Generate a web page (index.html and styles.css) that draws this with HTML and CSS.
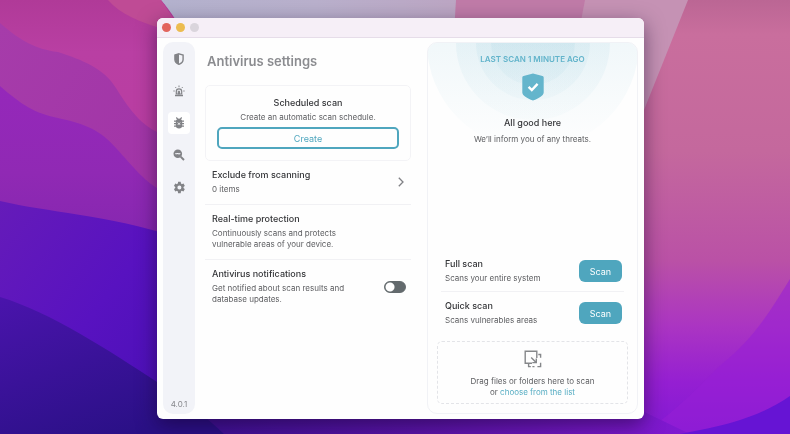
FILE: index.html
```html
<!DOCTYPE html>
<html lang="en">
<head>
    <meta charset="UTF-8">
    <meta name="viewport" content="width=device-width, initial-scale=1.0">
    <title>Antivirus settings</title>
    <link rel="stylesheet" href="styles.css">
</head>
<body>
    <!-- desktop wallpaper -->
    <svg class="wallpaper" viewBox="0 0 790 434" preserveAspectRatio="none" aria-hidden="true">
        <defs>
            <linearGradient id="sky" x1="0" y1="0" x2="1" y2="0">
                <stop offset="0" stop-color="#aeb4d0"/>
                <stop offset="0.4" stop-color="#b9b0cc"/>
                <stop offset="1" stop-color="#c48fb0"/>
            </linearGradient>
            <linearGradient id="rose" x1="0" y1="0" x2="0" y2="1">
                <stop offset="0" stop-color="#bb6694"/>
                <stop offset="0.08" stop-color="#c96e9d"/>
                <stop offset="0.35" stop-color="#c4689d"/>
                <stop offset="0.6" stop-color="#ba51a6"/>
                <stop offset="0.75" stop-color="#ab35c2"/>
                <stop offset="0.88" stop-color="#951fd2"/>
                <stop offset="1" stop-color="#8219d4"/>
            </linearGradient>
            <linearGradient id="pink" x1="0" y1="0" x2="0" y2="1">
                <stop offset="0" stop-color="#b03a98"/>
                <stop offset="0.2" stop-color="#b93fa3"/>
                <stop offset="1" stop-color="#b93a9f"/>
            </linearGradient>
            <linearGradient id="plum" x1="0" y1="0" x2="1" y2="1">
                <stop offset="0" stop-color="#a63caa"/>
                <stop offset="1" stop-color="#a033a6"/>
            </linearGradient>
            <linearGradient id="violet" x1="0" y1="0" x2="0" y2="1">
                <stop offset="0" stop-color="#9528ba"/>
                <stop offset="0.5" stop-color="#9029b4"/>
                <stop offset="1" stop-color="#8226ae"/>
            </linearGradient>
            <linearGradient id="indigo" x1="0" y1="0" x2="1" y2="1">
                <stop offset="0" stop-color="#651bb9"/>
                <stop offset="0.5" stop-color="#5812c0"/>
                <stop offset="1" stop-color="#470fb4"/>
            </linearGradient>
            <linearGradient id="navy" x1="0" y1="0" x2="0.6" y2="1">
                <stop offset="0" stop-color="#4a14ac"/>
                <stop offset="1" stop-color="#2a1086"/>
            </linearGradient>
            <linearGradient id="floor" x1="0" y1="0" x2="1" y2="0">
                <stop offset="0" stop-color="#38108f"/>
                <stop offset="0.5" stop-color="#5a14a8"/>
                <stop offset="1" stop-color="#8219d2"/>
            </linearGradient>
        </defs>
        <rect width="790" height="434" fill="url(#sky)"/>
        <path d="M456 0H790V434H430z" fill="#c07ba8"/>
        <path d="M585 0H690L640 130H560z" fill="#c592b4"/>
        <path d="M688 0H790V434H600V250L644 110z" fill="url(#rose)"/>
        <path d="M790 279C768 315 752 340 722 364C700 385 670 418 640 434H790z" fill="#971fd6" opacity=".55"/>
        <path d="M150 405H630L690 434H150z" fill="url(#floor)"/>
        <path d="M790 396C764 414 735 423 700 430L680 434H790z" fill="#6614d4"/>
        <path d="M0 0H161C180 22 200 60 220 120V260H0z" fill="url(#pink)"/>
        <path d="M108 0H161L180 28H160C140 22 120 14 108 0z" fill="#bf4b95"/>
        <path d="M0 23C22 42 36 49 58 52C82 60 104 68 116 88C132 114 142 124 157 132V260H0z" fill="url(#plum)"/>
        <path d="M0 86C22 105 34 113 58 118C86 124 100 130 116 148C135 169 144 180 157 188V260H0z" fill="url(#violet)"/>
        <path d="M0 201C50 213 100 213 180 238V434H0z" fill="url(#indigo)"/>
        <path d="M0 297C50 312 110 351 157 382C185 400 205 416 224 434H0z" fill="url(#navy)"/>
    </svg>

    <div class="window">
        <div class="titlebar">
            <span class="light close"></span>
            <span class="light minimize"></span>
            <span class="light"></span>
        </div>
        <div class="content">
            <nav class="sidebar">
                <button class="nav-item" aria-label="Protection">
                    <svg width="10" height="12" viewBox="0 0 10 12"><path d="M5 .8L9.100 2v4.500C9.100 9 7.300 10.400 5 11.300C2.700 10.400.9 9 .9 6.500V2z" fill="none" stroke="currentColor" stroke-width="1.400"/><path d="M5 1L1 2.200v4.300C1 9 3 10.400 5 11.200z" fill="currentColor"/></svg>
                </button>
                <button class="nav-item" aria-label="Alerts">
                    <svg width="12" height="12" viewBox="0 0 12 12" fill="none" stroke="currentColor"><path d="M3.300 9V6.500a2.700 2.700 0 0 1 5.400 0V9z" stroke-width="1.200"/><path d="M5.200 6.200h1.400v2.800H5.200z" fill="currentColor"/><path d="M2 10.500h8" stroke-width="1.600"/><path d="M6 .5v1.700M2.300 2.100l1 1M9.700 2.100l-1 1M.4 6h1.300M10.300 6h1.300"/></svg>
                </button>
                <button class="nav-item active" aria-label="Antivirus">
                    <svg width="12" height="12" viewBox="0 0 12 12"><path d="M3.300.5l1.400 1.700M8.700.5L7.300 2.200M1 4.200h10M1 6.700h10M1 9.200h10" stroke="currentColor" stroke-width="1.200"/><path d="M6 1.500C7.900 1.500 9.200 3 9.200 4.800v3.500a3.200 3.200 0 0 1-6.400 0V4.800C2.800 3 4.100 1.500 6 1.500z" fill="currentColor"/><path d="M4.900 5.600l2.200 2.200M7.100 5.600L4.900 7.800" stroke="#fff" stroke-width=".9"/></svg>
                </button>
                <button class="nav-item" aria-label="Scanner">
                    <svg width="12" height="12" viewBox="0 0 12 12"><circle cx="4.800" cy="4.800" r="4.300" fill="currentColor"/><path d="M7.600 7.600l3.400 3.400" stroke="currentColor" stroke-width="2"/><path d="M2.400 4.300C3.400 5.400 4.200 4.200 4.900 4.600S6.600 5 7.300 4.300" fill="none" stroke="#f2f3f8" stroke-width="1.100"/></svg>
                </button>
                <button class="nav-item" aria-label="Settings">
                    <svg width="13" height="13" viewBox="0 0 24 24"><path fill="currentColor" d="M19.400 13a7.500 7.500 0 0 0 0-2l2.200-1.700c.2-.2.300-.5.100-.7l-2.100-3.600c-.1-.2-.4-.3-.6-.2l-2.600 1a7.600 7.600 0 0 0-1.700-1L14.300 2c0-.3-.3-.5-.5-.5h-4c-.3 0-.5.2-.5.500l-.4 2.800a8 8 0 0 0-1.700 1l-2.600-1c-.2-.1-.5 0-.6.2L1.900 8.600c-.1.200-.1.500.1.700L4.200 11a7.500 7.500 0 0 0 0 2L2 14.700c-.2.200-.2.500-.1.700L4 19c.1.200.4.300.6.200l2.600-1c.5.400 1.100.7 1.700 1l.4 2.800c0 .3.200.5.500.5h4c.2 0 .5-.2.500-.5l.4-2.800c.6-.3 1.200-.6 1.700-1l2.600 1c.2.100.5 0 .6-.2l2.100-3.600c.1-.2.100-.5-.1-.7zM11.800 15.700a3.700 3.700 0 1 1 0-7.400 3.700 3.700 0 0 1 0 7.400z"/></svg>
                </button>
                <span class="version">4.0.1</span>
            </nav>

            <main class="settings">
                <h1>Antivirus settings</h1>
                <section class="card">
                    <h2>Scheduled scan</h2>
                    <p>Create an automatic scan schedule.</p>
                    <button class="create">Create</button>
                </section>
                <section class="row">
                    <div>
                        <h2>Exclude from scanning</h2>
                        <p>0 items</p>
                    </div>
                    <button class="chevron" aria-label="Open exclusions">
                        <svg width="6" height="10" viewBox="0 0 6 10"><path d="M.8.700L5 5L.8 9.300" fill="none" stroke="currentColor" stroke-width="1.300"/></svg>
                    </button>
                </section>
                <section class="row">
                    <div>
                        <h2>Real-time protection</h2>
                        <p>Continuously scans and protects<br>vulnerable areas of your device.</p>
                    </div>
                </section>
                <section class="row">
                    <div>
                        <h2><label for="notifications">Antivirus notifications</label></h2>
                        <p>Get notified about scan results and<br>database updates.</p>
                    </div>
                    <input class="toggle" type="checkbox" id="notifications">
                </section>
            </main>

            <aside class="panel">
                <svg class="rings" width="212" height="112" viewBox="0 0 212 112" aria-hidden="true">
                    <defs>
                        <linearGradient id="ring" gradientUnits="userSpaceOnUse" x1="0" y1="0" x2="0" y2="108">
                            <stop offset="0" stop-color="#6fb8d0" stop-opacity=".09"/>
                            <stop offset="1" stop-color="#6fb8d0" stop-opacity="0"/>
                        </linearGradient>
                    </defs>
                    <g fill="url(#ring)">
                        <circle cx="106" cy="0" r="106"/>
                        <circle cx="106" cy="0" r="77"/>
                        <circle cx="106" cy="0" r="57"/>
                        <circle cx="106" cy="0" r="42"/>
                    </g>
                </svg>
                <div class="status">
                    <span class="last-scan">LAST SCAN 1 MINUTE AGO</span>
                    <svg class="shield" width="22" height="28" viewBox="0 0 22 28"><path d="M11 .5L20.500 3Q21.700 3.300 21.700 4.500V19.500C21.700 22.500 17 25.300 11 27.600C5 25.300.3 22.500.3 19.500V4.500Q.3 3.300 1.500 3z" fill="#64b5cc"/><path d="M6.600 13.800L9.800 17L15.600 10.900" fill="none" stroke="#fff" stroke-width="2.400"/></svg>
                    <h2>All good here</h2>
                    <p>We’ll inform you of any threats.</p>
                </div>
                <div class="scans">
                    <div class="scan">
                        <div>
                            <h2>Full scan</h2>
                            <p>Scans your entire system</p>
                        </div>
                        <button class="scan-button">Scan</button>
                    </div>
                    <div class="scan">
                        <div>
                            <h2>Quick scan</h2>
                            <p>Scans vulnerables areas</p>
                        </div>
                        <button class="scan-button">Scan</button>
                    </div>
                </div>
                <div class="dropzone">
                    <svg width="18" height="18" viewBox="0 0 18 18" fill="none" stroke="#85878a" stroke-width="1.400"><path d="M8 13.300H1.200V1.200h11.600V8"/><path d="M7.200 7.500l4.700 4.700M12.300 8.600v4h-4"/><path d="M14.300 4.500h2.300v3.200M16.600 12.700v3.900h-3.200M10.500 16.600H8.400M4.600 13.500v3.100h2.200"/></svg>
                    <p>Drag files or folders here to scan<br>or <a href="#">choose from the list</a></p>
                </div>
            </aside>
        </div>
    </div>
</body>
</html>
```
FILE: styles.css
```css
* {
    box-sizing: border-box;
}
body {
    display: flex;
    min-height: 100vh;
    margin: 0;
    padding: 18px 146px 15px 157px;
    font-family: Inter, "Liberation Sans", sans-serif;
    font-size: 8px;
    line-height: 11px;
    color: #5c5d60;
}
h1, h2, p {
    margin: 0;
}
h1 {
    padding-left: 2px;
    font-size: 13px;
    font-weight: 600;
    line-height: 18px;
    color: #8b8c90;
}
h2 {
    margin-bottom: 3px;
    font-size: 9px;
    font-weight: 500;
    line-height: 12px;
    color: #343538;
}
button {
    padding: 0;
    border: 0;
    background: none;
    font-family: inherit;
    cursor: pointer;
}
a {
    color: #57adc3;
    text-decoration: none;
}
svg {
    display: block;
}
.wallpaper {
    position: fixed;
    inset: 0;
    z-index: -1;
    width: 100%;
    height: 100%;
}
.window {
    display: flex;
    flex: 1;
    flex-direction: column;
    border-radius: 6px;
    background-color: #fefefe;
    box-shadow: 0 6px 20px rgba(20, 0, 40, 0.5);
    overflow: hidden;
}
.titlebar {
    display: flex;
    align-items: center;
    gap: 5px;
    height: 20px;
    padding: 0 5px;
    border-bottom: 1px solid #e6dde9;
    background-color: #f6eff7;
}
.light {
    width: 9px;
    height: 9px;
    border-radius: 50%;
    background-color: #dad5dc;
}
.close {
    background-color: #e2655d;
}
.minimize {
    background-color: #ecbc50;
}
.content {
    display: flex;
    flex: 1;
    padding: 4px 6px 5px;
}
.sidebar {
    display: flex;
    flex-direction: column;
    align-items: center;
    gap: 10px;
    width: 32px;
    padding: 6px 0 4px;
    border-radius: 10px;
    background-color: #f2f3f8;
}
.nav-item {
    display: flex;
    align-items: center;
    justify-content: center;
    width: 22px;
    height: 22px;
    border-radius: 4px;
    color: #828387;
}
.active {
    background-color: #ffffff;
}
.version {
    margin-top: auto;
    color: #85868b;
}
.settings {
    flex: 1;
    padding: 10px 16px 0 10px;
}
.card {
    display: flex;
    flex-direction: column;
    align-items: center;
    margin-top: 15px;
    padding: 11px;
    border: 1px solid #f3f3f6;
    border-radius: 5px;
}
.create {
    width: 100%;
    height: 22px;
    margin-top: 4px;
    border: 2px solid #4fa6be;
    border-radius: 5px;
    font-size: 9px;
    color: #4fa6be;
}
.row {
    display: flex;
    align-items: center;
    justify-content: space-between;
    padding: 8px 5px 9px 7px;
    border-bottom: 1px solid #f1f1f4;
}
.row:last-child {
    border-bottom: 0;
}
.chevron {
    padding: 2px;
    color: #808185;
}
.toggle {
    appearance: none;
    width: 22px;
    height: 12px;
    margin: 0;
    border: 1px solid #636a6d;
    border-radius: 6px;
    background: radial-gradient(circle at 5px 5px, #ffffff 4px, #636a6d 5px);
}
.panel {
    position: relative;
    display: flex;
    flex-direction: column;
    width: 211px;
    padding: 11px 9px 9px;
    border: 1px solid #f1f2f6;
    border-radius: 10px;
    overflow: hidden;
}
.rings {
    position: absolute;
    top: 0;
    left: 50%;
    transform: translateX(-50%);
}
.status {
    position: relative;
    display: flex;
    flex-direction: column;
    align-items: center;
}
.last-scan {
    font-weight: 600;
    color: #62b4cb;
}
.shield {
    margin: 8px 0 16px;
}
.status h2 {
    margin-bottom: 5px;
}
.scans {
    margin: auto 4px 8px;
}
.scan {
    display: flex;
    align-items: center;
    justify-content: space-between;
    padding: 8px 2px 7px 4px;
}
.scan + .scan {
    border-top: 1px solid #f1f1f4;
}
.scan-button {
    width: 43px;
    height: 22px;
    border-radius: 6px;
    background-color: #4fa6be;
    font-size: 9px;
    color: #ffffff;
}
.dropzone {
    display: flex;
    flex-direction: column;
    align-items: center;
    gap: 8px;
    padding: 8px 0 5px;
    border: 1px dashed #e3e4e8;
    border-radius: 5px;
    text-align: center;
}
```
